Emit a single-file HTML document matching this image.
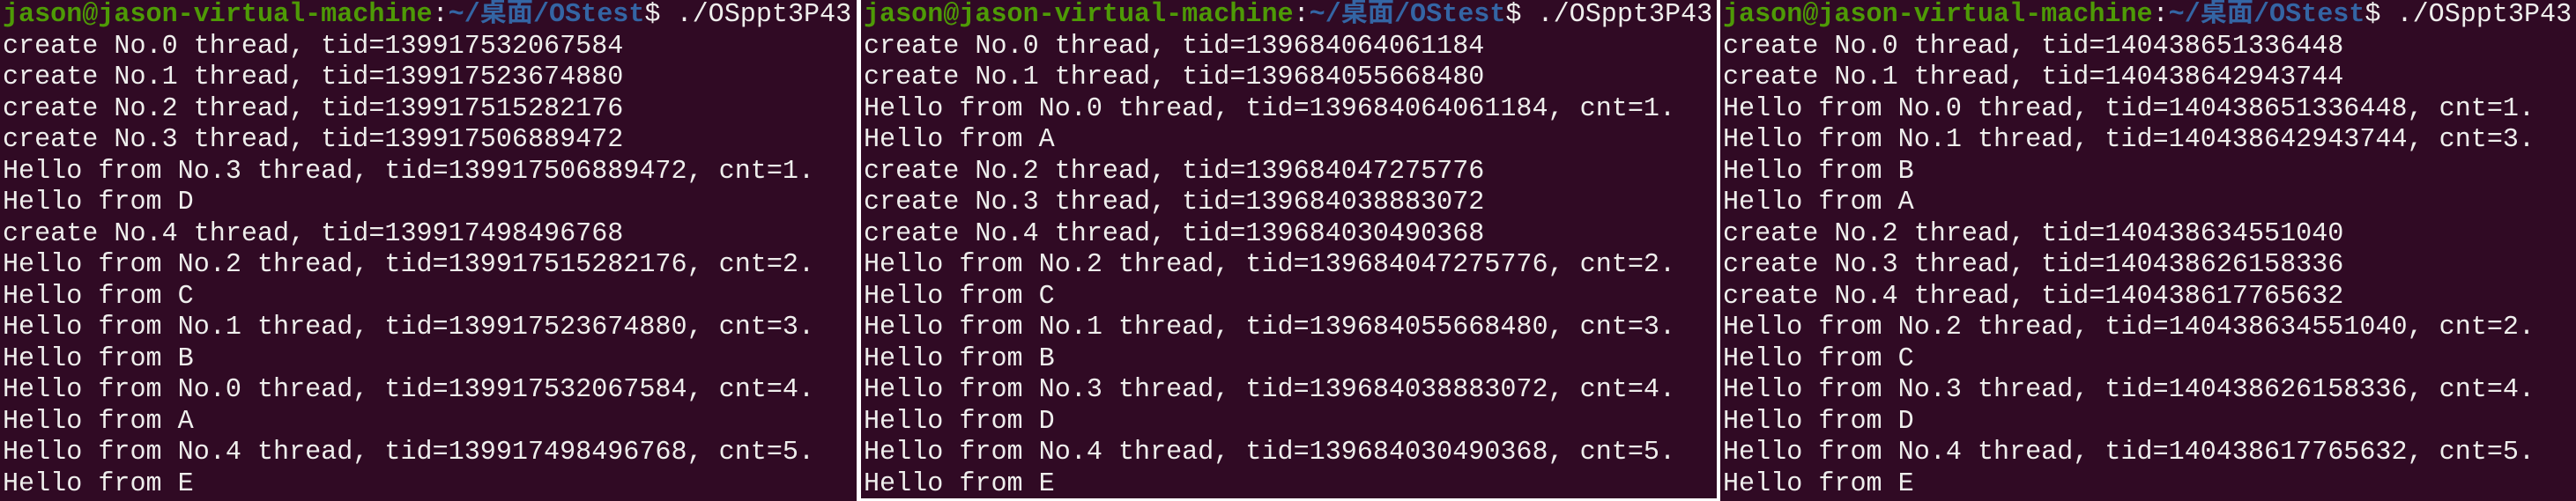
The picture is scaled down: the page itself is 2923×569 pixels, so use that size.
<!DOCTYPE html>
<html><head><meta charset="utf-8"><style>
html,body{margin:0;padding:0;width:2923px;height:569px;overflow:hidden;background:#fff;}
.p{position:absolute;top:0;height:569px;background:#300a24;overflow:hidden;}
pre{margin:0;padding:0 0 0 3px;font-family:"Liberation Mono","Noto Sans CJK SC",monospace;font-size:30.1px;line-height:35.5px;color:#eeeeec;white-space:pre;}
.g{color:#4e9a06;font-weight:bold}.b{color:#3465a4;font-weight:bold}
</style></head><body>
<div class="p" style="left:0;width:972px"><pre><span class="g">jason@jason-virtual-machine</span>:<span class="b">~/桌面/OStest</span>$ ./OSppt3P43
create No.0 thread, tid=139917532067584
create No.1 thread, tid=139917523674880
create No.2 thread, tid=139917515282176
create No.3 thread, tid=139917506889472
Hello from No.3 thread, tid=139917506889472, cnt=1.
Hello from D
create No.4 thread, tid=139917498496768
Hello from No.2 thread, tid=139917515282176, cnt=2.
Hello from C
Hello from No.1 thread, tid=139917523674880, cnt=3.
Hello from B
Hello from No.0 thread, tid=139917532067584, cnt=4.
Hello from A
Hello from No.4 thread, tid=139917498496768, cnt=5.
Hello from E</pre></div>
<div class="p" style="left:977px;width:971px;height:566px"><pre><span class="g">jason@jason-virtual-machine</span>:<span class="b">~/桌面/OStest</span>$ ./OSppt3P43
create No.0 thread, tid=139684064061184
create No.1 thread, tid=139684055668480
Hello from No.0 thread, tid=139684064061184, cnt=1.
Hello from A
create No.2 thread, tid=139684047275776
create No.3 thread, tid=139684038883072
create No.4 thread, tid=139684030490368
Hello from No.2 thread, tid=139684047275776, cnt=2.
Hello from C
Hello from No.1 thread, tid=139684055668480, cnt=3.
Hello from B
Hello from No.3 thread, tid=139684038883072, cnt=4.
Hello from D
Hello from No.4 thread, tid=139684030490368, cnt=5.
Hello from E</pre></div>
<div class="p" style="left:1952px;width:971px"><pre><span class="g">jason@jason-virtual-machine</span>:<span class="b">~/桌面/OStest</span>$ ./OSppt3P43
create No.0 thread, tid=140438651336448
create No.1 thread, tid=140438642943744
Hello from No.0 thread, tid=140438651336448, cnt=1.
Hello from No.1 thread, tid=140438642943744, cnt=3.
Hello from B
Hello from A
create No.2 thread, tid=140438634551040
create No.3 thread, tid=140438626158336
create No.4 thread, tid=140438617765632
Hello from No.2 thread, tid=140438634551040, cnt=2.
Hello from C
Hello from No.3 thread, tid=140438626158336, cnt=4.
Hello from D
Hello from No.4 thread, tid=140438617765632, cnt=5.
Hello from E</pre></div>
</body></html>
